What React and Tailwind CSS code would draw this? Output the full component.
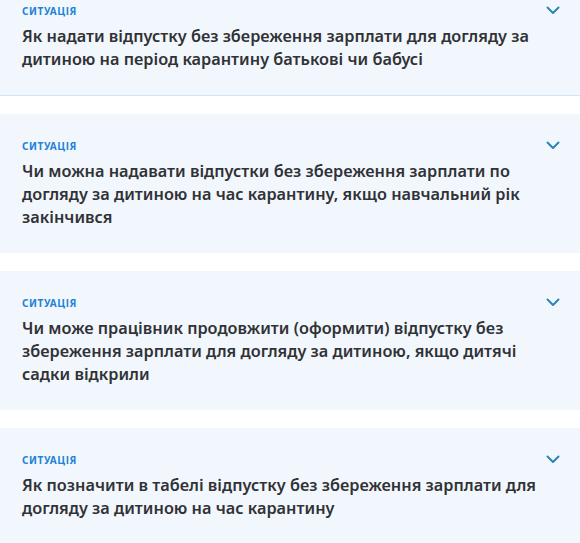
import React from "react";

const items = [
  "Як надати відпустку без збереження зарплати для догляду за дитиною на період карантину батькові чи бабусі",
  "Чи можна надавати відпустки без збереження зарплати по догляду за дитиною на час карантину, якщо навчальний рік закінчився",
  "Чи може працівник продовжити (оформити) відпустку без збереження зарплати для догляду за дитиною, якщо дитячі садки відкрили",
  "Як позначити в табелі відпустку без збереження зарплати для догляду за дитиною на час карантину",
];

function Chevron() {
  return (
    <svg width="14" height="9" viewBox="0 0 14 9" fill="none" className="mt-[2px] shrink-0">
      <path d="M1.5 1.5 L7 7 L12.5 1.5" stroke="#2b86b8" strokeWidth="2" strokeLinecap="round" strokeLinejoin="round" />
    </svg>
  );
}

export default function App() {
  return (
    <div className="w-[580px] h-[543px] overflow-hidden bg-white" style={{ fontFamily: '"Noto Sans", "Open Sans", sans-serif' }}>
      <div className="-mt-[21px] flex flex-col gap-[18px]">
        {items.map((t, i) => (
          <div
            key={i}
            className={`bg-[#f2f7fd] pl-[22px] pr-[20px] pt-[25px] pb-[24px] ${i === 0 ? "border-b border-[#d3e5f5]" : ""}`}
          >
            <div className="flex justify-between items-start">
              <div className="text-[10px] leading-[14px] font-bold tracking-[0.06em] text-[#2182d6] uppercase">Ситуація</div>
              <Chevron />
            </div>
            <div className="mt-[7px] pr-[20px] text-[16.3px] leading-[23px] font-semibold text-[#303236]">{t}</div>
          </div>
        ))}
      </div>
    </div>
  );
}
